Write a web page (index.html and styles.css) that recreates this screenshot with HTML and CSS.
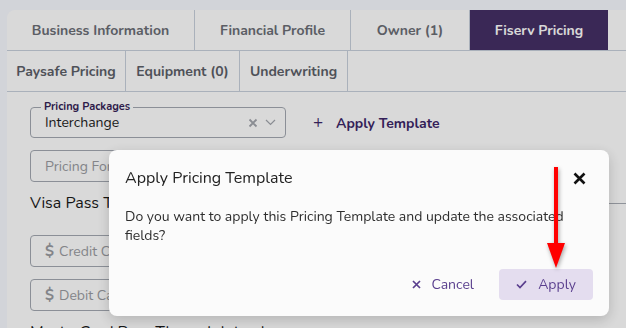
FILE: index.html
```html
<!DOCTYPE html>
<html lang="en">
<head>
    <meta charset="UTF-8">
    <meta name="viewport" content="width=device-width, initial-scale=1.0">
    <title>Fiserv Pricing</title>
    <link rel="stylesheet" href="styles.css">
</head>
<body>
    <div class="card">
        <div class="tab-row">
            <div class="tab w188">Business Information</div>
            <div class="tab w156">Financial Profile</div>
            <div class="tab w119">Owner (1)</div>
            <div class="tab w139 active">Fiserv Pricing</div>
        </div>
        <div class="tab-row second">
            <div class="tab w119b">Paysafe Pricing</div>
            <div class="tab w114">Equipment (0)</div>
            <div class="tab w108">Underwriting</div>
        </div>

        <div class="content">
            <div class="package-row">
                <div class="select-box">
                    <span class="float-label">Pricing Packages</span>
                    <span class="select-value">Interchange</span>
                    <span class="select-icons">
                        <svg width="10" height="10" viewBox="0 0 10 10"><path d="M1.5 1.5 L8.5 8.5 M8.5 1.5 L1.5 8.5" stroke="#a3a6ad" stroke-width="1.8"/></svg>
                        <svg width="11" height="7" viewBox="0 0 11 7"><path d="M1 1 L5.5 5.5 L10 1" stroke="#a3a6ad" stroke-width="1.2" fill="none"/></svg>
                    </span>
                </div>
                <button class="link-btn"><span class="plus">+</span> Apply Template</button>
            </div>

            <div class="input-box"><span class="placeholder">Pricing Formula</span></div>

            <div class="section-title"><span>Visa Pass Through Interchange</span><span class="rule"></span></div>

            <div class="input-box first"><span class="dollar">$</span><span class="placeholder">Credit Card Rate</span></div>
            <div class="input-box"><span class="dollar">$</span><span class="placeholder">Debit Card Rate</span></div>

            <div class="section-title last"><span>MasterCard Pass Through Interchange</span><span class="rule"></span></div>
        </div>
    </div>

    <div class="backdrop"></div>

    <div class="modal">
        <div class="modal-head">
            <span class="modal-title">Apply Pricing Template</span>
            <svg class="close" width="13" height="13" viewBox="0 0 13 13"><path d="M1.5 1.5 L11.5 11.5 M11.5 1.5 L1.5 11.5" stroke="#111" stroke-width="2.6"/></svg>
        </div>
        <p class="modal-body">Do you want to apply this Pricing Template and update the associated fields?</p>
        <div class="modal-actions">
            <button class="btn cancel">
                <svg width="9" height="9" viewBox="0 0 9 9"><path d="M1 1 L8 8 M8 1 L1 8" stroke="#5a3f8e" stroke-width="1.7"/></svg>
                Cancel
            </button>
            <button class="btn apply">
                <svg width="11" height="9" viewBox="0 0 11 9"><path d="M1 4.5 L4 7.5 L10 1.2" stroke="#5a3f8e" stroke-width="1.7" fill="none"/></svg>
                Apply
            </button>
        </div>
    </div>

    <svg class="arrow" width="24" height="106" viewBox="0 0 24 106">
        <rect x="10" y="0" width="4" height="82" fill="#ff0000"/>
        <polygon points="3,76 21,76 12,101" fill="#ff0000"/>
    </svg>
</body>
</html>
```

FILE: styles.css
```css
body {
    margin: 0;
    padding: 10px 0 0 7px;
    height: 318px;
    overflow: hidden;
    background-color: #f7f9ff;
    font-family: "Nunito", "Lato", sans-serif;
    color: #222;
}

.card {
    width: 619px;
    height: 318px;
    overflow: hidden;
    background-color: #fff;
    border-radius: 8px 0 0 0;
}

.tab-row {
    display: flex;
    height: 40px;
    border-bottom: 1px solid #c8d0dc;
}
.tab {
    display: flex;
    align-items: center;
    justify-content: center;
    border-right: 1px solid #c8d0dc;
    font-size: 14px;
    font-weight: bold;
    color: #6b6e76;
    box-sizing: border-box;
}
.tab-row.second .tab {
    color: #5c6068;
}
.tab.active {
    background-color: #452f65;
    color: #fff;
    border-right: 1px solid #fff;
}
.w188 { width: 188px; }
.w156 { width: 156px; }
.w119 { width: 119px; }
.w139 { width: 139px; }
.w119b { width: 119px; }
.w114 { width: 114px; }
.w108 { width: 108px; }

.content {
    padding: 15px 0 0 23px;
    display: flex;
    flex-direction: column;
}

.package-row {
    display: flex;
    align-items: center;
    gap: 22px;
}
.select-box {
    position: relative;
    width: 256px;
    height: 31px;
    box-sizing: border-box;
    border: 1px solid #a4a9b2;
    border-radius: 4px;
    display: flex;
    align-items: center;
    padding: 0 9px 0 14px;
}
.float-label {
    position: absolute;
    top: -8px;
    left: 10px;
    padding: 0 3px;
    background-color: #fff;
    font-size: 11px;
    font-weight: bold;
    color: #352356;
    line-height: 14px;
}
.select-value {
    flex: 1;
    font-size: 14px;
    color: #1e1e1e;
}
.select-icons {
    display: flex;
    align-items: center;
    gap: 7px;
}
.link-btn {
    border: none;
    background: none;
    padding: 0 0 0 5px;
    font-family: inherit;
    font-size: 14px;
    font-weight: bold;
    color: #3c2668;
}
.plus {
    font-size: 17px;
    font-weight: normal;
    margin-right: 9px;
}

.input-box {
    width: 256px;
    height: 32px;
    box-sizing: border-box;
    border: 1px solid #a4a9b2;
    border-radius: 4px;
    display: flex;
    align-items: center;
    padding-left: 14px;
    font-size: 14px;
    margin-top: 12px;
}
.input-box.first {
    margin-top: 0;
}
.placeholder {
    color: #9a9ca2;
}
.dollar {
    font-weight: bold;
    font-size: 15px;
    color: #9a9ca2;
    margin-right: 5px;
}

.section-title {
    display: flex;
    align-items: center;
    gap: 10px;
    font-size: 16px;
    color: #1a1a1a;
    margin-top: 11px;
    margin-bottom: 22px;
    height: 20px;
}
.section-title.last {
    margin-top: 11px;
}
.section-title .rule {
    flex: 1;
    border-top: 1px solid #a9adb5;
}

.backdrop {
    position: fixed;
    inset: 0;
    background-color: rgba(0, 0, 0, 0.15);
}

.modal {
    position: fixed;
    left: 109px;
    top: 150px;
    width: 500px;
    height: 166px;
    box-sizing: border-box;
    padding: 18px 16px 16px 16px;
    background-color: #fbfbfb;
    border-radius: 8px;
    box-shadow: 0 4px 14px rgba(0, 0, 0, 0.18);
    display: flex;
    flex-direction: column;
}
.modal-head {
    display: flex;
    justify-content: space-between;
    align-items: center;
    height: 20px;
}
.modal-title {
    font-size: 16px;
    color: #222;
}
.close {
    margin-right: 7px;
}
.modal-body {
    margin: 19px 0 0 0;
    font-size: 14px;
    line-height: 19px;
    color: #2e2e2e;
}
.modal-actions {
    margin-top: auto;
    display: flex;
    justify-content: flex-end;
    gap: 12px;
}
.btn {
    height: 31px;
    border: none;
    border-radius: 4px;
    font-family: inherit;
    font-size: 14px;
    color: #5a3f8e;
    display: flex;
    align-items: center;
    gap: 11px;
    background: none;
}
.cancel {
    padding: 0 13px 0 12px;
}
.apply {
    width: 94px;
    justify-content: center;
    background-color: #e4ddef;
}

.arrow {
    position: fixed;
    left: 544px;
    top: 167px;
    filter: drop-shadow(1px 2px 2px rgba(0, 0, 0, 0.35));
}
```
